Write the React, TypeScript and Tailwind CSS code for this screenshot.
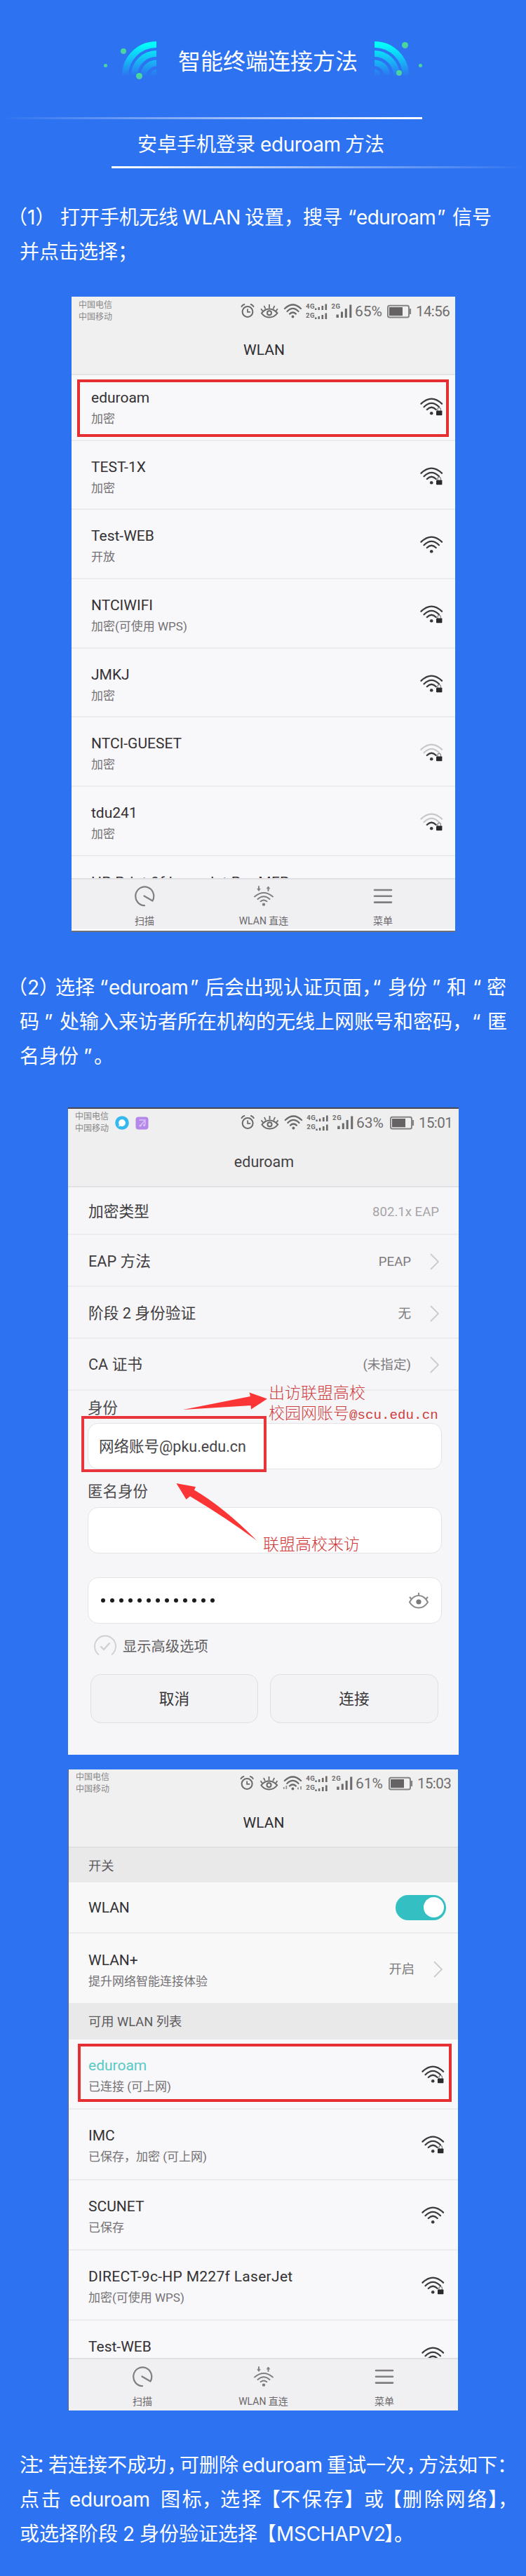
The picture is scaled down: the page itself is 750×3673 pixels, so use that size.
import React from "react";

type Seg = { t: string; w: string; c?: string };

const FONT_BODY = "font-['Inter','Noto_Sans_CJK_SC',sans-serif]";
const FONT_PHONE = "font-['Roboto','Noto_Sans_CJK_SC',sans-serif]";
const HALF = "[font-feature-settings:'halt']";
const LATIN = "tracking-[-0.4px]";

function Line({ segs }: { segs: Seg[] }) {
  return (
    <p className="flex h-[49px] whitespace-pre pl-7 text-[28px] leading-[52px] text-white">
      {segs.map((s, i) => (
        <span key={i} className={`shrink-0 ${s.w} ${s.c ?? ""}`}>
          {s.t}
        </span>
      ))}
    </p>
  );
}

const STEP_ONE: Seg[][] = [
  [
    { t: "（1）", w: "w-[61px] -ml-[3px]", c: HALF },
    { t: "打开手机无线", w: "w-[174px]" },
    { t: "WLAN", w: "w-[89px]", c: "tracking-[-0.2px]" },
    { t: "设置，", w: "w-[83px]" },
    { t: "搜寻", w: "w-[64px]" },
    { t: "“", w: "w-[12px]" },
    { t: "eduroam", w: "w-[115px]", c: "tracking-[-0.6px]" },
    { t: "”", w: "w-[22px]" },
    { t: "信号", w: "w-[56px]" },
  ],
  [{ t: "并点击选择", w: "w-[140px]" }, { t: "；", w: "w-[28px]" }],
];

const STEP_TWO: Seg[][] = [
  [
    { t: "（2）", w: "w-[54px] -ml-[3px]", c: HALF },
    { t: "选择", w: "w-[63px]" },
    { t: "“", w: "w-[13px]" },
    { t: "eduroam", w: "w-[116px]", c: "tracking-[-0.6px]" },
    { t: "”", w: "w-[21px]" },
    { t: "后会出现认证页面", w: "w-[224px]" },
    { t: "，", w: "w-[15px]", c: HALF },
    { t: "“", w: "w-[22px]" },
    { t: "身份", w: "w-[63px]" },
    { t: "”", w: "w-[21px]" },
    { t: "和", w: "w-[37px]" },
    { t: "“", w: "w-[20px]" },
    { t: "密", w: "w-[28px]" },
  ],
  [
    { t: "码", w: "w-[35px]" },
    { t: "”", w: "w-[22px]" },
    { t: "处输入来访者所在机构的无线上网账号和密码", w: "w-[560px]" },
    { t: "，", w: "w-[28px]" },
    { t: "“", w: "w-[22px]" },
    { t: "匿", w: "w-[28px]" },
  ],
  [
    { t: "名身份", w: "w-[91px]" },
    { t: "”", w: "w-[15px]" },
    { t: "。", w: "w-[28px]" },
  ],
];

const NOTE: Seg[][] = [
  [
    { t: "注", w: "w-[23px]" },
    { t: "：", w: "w-[18px]", c: HALF },
    { t: "若连接不成功", w: "w-[169px]" },
    { t: "，", w: "w-[18px]", c: HALF },
    { t: "可删除", w: "w-[89px]" },
    { t: "eduroam", w: "w-[121px]", c: LATIN },
    { t: "重试一次", w: "w-[113px]" },
    { t: "，", w: "w-[18px]", c: HALF },
    { t: "方法如下", w: "w-[112px]" },
    { t: "：", w: "w-[14px]", c: HALF },
  ],
  [
    { t: "点击", w: "w-[71px]", c: "tracking-[2.8px]" },
    { t: "eduroam", w: "w-[130px]", c: LATIN },
    { t: "图标", w: "w-[59px]", c: "tracking-[2.8px]" },
    { t: "，", w: "w-[26px]" },
    { t: "选择", w: "w-[72px]", c: "tracking-[2.8px]" },
    { t: "【", w: "w-[14px]", c: HALF },
    { t: "不保存", w: "w-[91px]", c: "tracking-[2.8px]" },
    { t: "】", w: "w-[28px]", c: HALF },
    { t: "或", w: "w-[40px]" },
    { t: "【", w: "w-[15px]", c: HALF },
    { t: "删除网络", w: "w-[122px]", c: "tracking-[2.8px]" },
    { t: "】", w: "w-[14px]", c: HALF },
    { t: "，", w: "w-[14px]", c: HALF },
  ],
  [
    { t: "或选择阶段", w: "w-[147px]" },
    { t: "2", w: "w-[24px]" },
    { t: "身份验证选择", w: "w-[181px]" },
    { t: "【", w: "w-[14px]", c: HALF },
    { t: "MSCHAPV2", w: "w-[154px]", c: "tracking-[-0.3px]" },
    { t: "】", w: "w-[14px]", c: HALF },
    { t: "。", w: "w-[28px]" },
  ],
];

function Waves({ side }: { side: "left" | "right" }) {
  const dots =
    side === "left"
      ? [
          [28, 17, 4],
          [2.5, 37.5, 2.5],
          [50.5, 52.5, 4.5],
        ]
      : [
          [43.5, 8.5, 4.5],
          [65.5, 37.5, 2.5],
          [35, 48, 4],
        ];
  return (
    <svg width="75" height="60" viewBox="0 0 75 60" className="shrink-0">
      <defs>
        <linearGradient id={`wave-${side}`} gradientUnits="userSpaceOnUse" x1="0" y1="7" x2="0" y2="53">
          <stop offset="0" stopColor="#00fffb" />
          <stop offset="1" stopColor="#2d72f0" />
        </linearGradient>
        <linearGradient id={`dot-${side}`} x1="0" y1="0" x2="0" y2="1">
          <stop offset="0" stopColor="#43e08f" />
          <stop offset="1" stopColor="#52c9b0" />
        </linearGradient>
      </defs>
      {side === "left" ? (
        <g fill="none" stroke="url(#wave-left)" strokeWidth="9">
          <path d="M30.5 52A44.5 44.5 0 0 1 75 7.5" />
          <path d="M43.5 52A31.5 31.5 0 0 1 75 20.5" />
          <path d="M57 52A18 18 0 0 1 75 34" />
          <path d="M75 43a9 9 0 0 0-9 9h9z" fill="url(#wave-left)" stroke="none" />
        </g>
      ) : (
        <g fill="none" stroke="url(#wave-right)" strokeWidth="9">
          <path d="M0 7.5A44.5 44.5 0 0 1 44.5 52" />
          <path d="M0 20.5A31.5 31.5 0 0 1 31.5 52" />
          <path d="M0 34A18 18 0 0 1 18 52" />
          <path d="M0 43a9 9 0 0 1 9 9H0z" fill="url(#wave-right)" stroke="none" />
        </g>
      )}
      {dots.map(([x, y, r], i) => (
        <circle key={i} cx={x} cy={y} r={r} fill={`url(#dot-${side})`} />
      ))}
    </svg>
  );
}

function WifiIcon({ lock, weak, color = "#3c3a3d" }: { lock?: boolean; weak?: boolean; color?: string }) {
  const faint = weak ? "#c9c8ca" : color;
  return (
    <svg width="33" height="26" viewBox="0 0 33 26" fill="none" strokeWidth="2.3" strokeLinecap="round">
      <path d="M1.5 8.7Q16.25-5.5 31 8.7" stroke={faint} />
      <path d="M5.5 13.3Q16.25 2.5 27 13.3" stroke={faint} />
      <path d="M9.8 17Q16.25 10.5 22.7 17" stroke={color} />
      <circle cx="16.2" cy="22.3" r="2.3" fill={color} />
      {lock && (
        <>
          <path d="M25 19v-2.4a2.2 2.2 0 0 1 4.4 0V19" stroke="#8d8b8e" strokeWidth="1.3" />
          <rect x="23" y="18.5" width="8.4" height="6.7" rx="0.8" fill="#2b292c" />
        </>
      )}
    </svg>
  );
}

function StatusIcons({ width, extra }: { width: number; extra?: boolean }) {
  return (
    <svg width={width} height="26" viewBox="0 0 164 26" preserveAspectRatio="none" fill="none" stroke="#6c6a6a" strokeWidth="2" className="shrink-0">
      <circle cx="13" cy="13.5" r="7.4" />
      <path d="M13 9.5v4.3h4" strokeWidth="1.8" />
      <path d="M4.5 6.2Q5.5 3.8 8.3 3M21.5 6.2Q20.5 3.8 17.7 3" strokeLinecap="round" />
      <path d="M33 15.5Q37.5 9.5 44 9.5T55.5 15.5Q51 21.5 44 21.5T33 15.5z" />
      <circle cx="44" cy="15.3" r="3" />
      <path d="M44 8.5V3M38.5 9.5L36.5 5M49.5 9.5L51.5 5M34.5 12.5L32.2 9.3M53.5 12.5L55.8 9.3" strokeWidth="1.8" />
      <g strokeLinecap="round" strokeWidth="2.2">
        <path d="M66 9Q77.5-2 89 9" />
        <path d="M69.5 13Q77.5 4.8 85.5 13" />
        <path d="M73 16.6Q77.5 12.4 82 16.6" />
      </g>
      <circle cx="77.5" cy="20.5" r="1.9" fill="#6c6a6a" stroke="none" />
      {extra && <path d="M65 18v3M68.5 16v5M85 18.5v3M89 17v4.5" strokeWidth="1.8" opacity="0.7" />}
      <g fill="#6c6a6a" stroke="none">
        <text x="96" y="9" className="text-[9.5px] font-bold" textLength="12.5">4G</text>
        <text x="96" y="22" className="text-[9.5px] font-bold" textLength="12.5">2G</text>
        <text x="132.5" y="9" className="text-[9.5px] font-bold" textLength="12.5">2G</text>
        <rect x="109" y="8.5" width="2.4" height="2.5" />
        <rect x="113.5" y="7" width="2.4" height="4" />
        <rect x="118.5" y="5" width="2.6" height="6" />
        <rect x="123.5" y="2.5" width="2.6" height="8.5" />
        <rect x="109" y="21.5" width="2.4" height="2.5" />
        <rect x="113.5" y="20" width="2.4" height="4" />
        <rect x="118.5" y="18" width="2.6" height="6" />
        <rect x="123.5" y="15.5" width="2.6" height="8.5" />
        <rect x="139.5" y="17.5" width="3.4" height="4.5" />
        <rect x="146" y="13.5" width="3" height="8.5" />
        <rect x="151.8" y="9" width="3" height="13" />
        <rect x="158.3" y="3.5" width="3" height="18.5" />
      </g>
    </svg>
  );
}

function Battery() {
  return (
    <svg width="35" height="20" viewBox="0 0 35 20" fill="none" className="shrink-0">
      <rect x="1" y="1.8" width="30" height="16.6" rx="2.5" stroke="#858383" strokeWidth="2" />
      <rect x="3" y="4" width="19" height="12.2" fill="#656363" />
      <path d="M33 6v8" stroke="#858383" strokeWidth="2.2" />
    </svg>
  );
}

function StatusBar(p: {
  pad: string;
  carrierW: string;
  icons: number;
  pctW: string;
  pct: string;
  time: string;
  apps?: boolean;
  extra?: boolean;
}) {
  return (
    <div className={`flex h-[26px] items-center text-[#6f6d6d] ${p.pad}`}>
      <div className={`flex shrink-0 items-center ${p.carrierW}`}>
        <div className="text-[12px] leading-[17px] text-[#8a8888]">
          <div>中国电信</div>
          <div>中国移动</div>
        </div>
        {p.apps && (
          <>
            <svg width="20" height="20" viewBox="0 0 20 20" className="ml-[8.5px]">
              <circle cx="10" cy="10" r="9.8" fill="#35b8ee" />
              <path d="M10 5a5 5 0 1 1-2.2 9.5L5 15.2l.9-2.4A5 5 0 0 1 10 5z" fill="#fff" />
            </svg>
            <svg width="19" height="19" viewBox="0 0 19 19" className="ml-[9px]">
              <rect x="0.5" y="0.5" width="18" height="18" rx="4" fill="#b488e8" />
              <path d="M5.500 5h8.500v6.500M7.500 12.500l5.500-6" stroke="#dcc5fa" strokeWidth="1.4" fill="none" />
              <circle cx="7" cy="13" r="1.6" fill="#dcc5fa" />
              <circle cx="12.6" cy="12.3" r="1.6" fill="#dcc5fa" />
            </svg>
          </>
        )}
      </div>
      <StatusIcons width={p.icons} extra={p.extra} />
      <span className={`shrink-0 pl-[2px] text-[21px] leading-[26px] ${p.pctW}`}>{p.pct}</span>
      <Battery />
      <span className="ml-[6px] text-[20.5px] leading-[26px] tracking-[-0.6px]">{p.time}</span>
    </div>
  );
}

function Chevron() {
  return (
    <svg width="13" height="24" viewBox="0 0 13 24" fill="none" stroke="#cbcbcd" strokeWidth="1.8" className="shrink-0">
      <path d="M1 1l11 11L1 23" />
    </svg>
  );
}

type Net = { name: string; sub?: string; lock?: boolean; weak?: boolean; active?: boolean; track?: string };

function NetRow({ net, height, pad }: { net: Net; height: string; pad: string }) {
  return (
    <div className={`flex shrink-0 items-start justify-between border-b-2 border-[#ecebed] ${height} ${pad}`}>
      <div className="pt-[25px]">
        <div className={`whitespace-nowrap text-[21px] leading-[24px] ${net.active ? "text-[#58c9c5]" : "text-[#333134]"} ${net.track ?? ""}`}>
          {net.name}
        </div>
        {net.sub && <div className="mt-[8px] whitespace-nowrap text-[17px] leading-[20px] text-[#747275]">{net.sub}</div>}
      </div>
      <div className="pt-[37px]">
        <WifiIcon lock={net.lock} weak={net.weak} />
      </div>
    </div>
  );
}

function Toolbar({ pad, height }: { pad: string; height: string }) {
  return (
    <div className={`flex shrink-0 border-t-2 border-[#e0dfe1] bg-[#f0eff1] text-[14px] leading-[18px] text-[#6b696c] ${pad} ${height}`}>
      <div className="flex w-[80px] flex-col items-center">
        <svg width="30" height="30" viewBox="0 0 30 30" fill="none" stroke="#807e81" strokeWidth="2.2" strokeLinecap="round" strokeLinejoin="round">
          <path d="M15 28.2A13 13.4 0 1 1 26.5 21.5L14.5 14.5" />
        </svg>
        <span className="mt-[11px]">扫描</span>
      </div>
      <div className="flex w-[90px] flex-col items-center">
        <svg width="30" height="30" viewBox="0 0 30 30" fill="none" stroke="#807e81" strokeWidth="1.9" strokeLinecap="round">
          <path d="M8 1v5M21.5 2v5" />
          <path d="M5.8 4.5L8 7.5l2.2-3zM19.3 3.8L21.5 1l2.2 2.8z" fill="#807e81" strokeWidth="0.6" />
          <path d="M2 15.5Q15 4.5 28 15.5M6.5 19Q15 11.5 23.5 19M10.5 22.2Q15 18.6 19.5 22.2" />
          <circle cx="15" cy="26.6" r="2.2" fill="#807e81" stroke="none" />
        </svg>
        <span className="mt-[11px] whitespace-nowrap">WLAN 直连</span>
      </div>
      <div className="flex w-[80px] flex-col items-center">
        <svg width="30" height="30" viewBox="0 0 30 30" stroke="#807e81" strokeWidth="2.6" strokeLinecap="round">
          <path d="M3 6h24M3 14.8h24M3 23.6h24" />
        </svg>
        <span className="mt-[11px]">菜单</span>
      </div>
    </div>
  );
}

const SCAN_LIST: Net[] = [
  { name: "eduroam", sub: "加密", lock: true },
  { name: "TEST-1X", sub: "加密", lock: true },
  { name: "Test-WEB", sub: "开放" },
  { name: "NTCIWIFI", sub: "加密(可使用 WPS)", lock: true },
  { name: "JMKJ", sub: "加密", lock: true },
  { name: "NTCI-GUESET", sub: "加密", lock: true, weak: true },
  { name: "tdu241", sub: "加密", lock: true, weak: true },
];

const CONNECTED_LIST: Net[] = [
  { name: "eduroam", sub: "已连接 (可上网)", lock: true, active: true },
  { name: "IMC", sub: "已保存，加密 (可上网)", lock: true },
  { name: "SCUNET", sub: "已保存" },
  { name: "DIRECT-9c-HP M227f LaserJet", sub: "加密(可使用 WPS)", lock: true, track: "tracking-[0.3px]" },
  { name: "Test-WEB" },
];

function ScanPhone() {
  return (
    <section className="relative ml-[102px] mt-[41px] flex h-[906px] w-[547px] flex-col overflow-hidden bg-[#f8f7f9]">
      <div className="h-[112px] shrink-0 border-b-2 border-[#e4e4e4] bg-[#f0f0f0] pt-[8px]">
        <StatusBar pad="pl-[10px]" carrierW="w-[228px]" icons={164} pctW="w-[48px]" pct="65%" time="14:56" />
        <h3 className="mt-[29px] pl-[2px] text-center text-[21px] leading-[26px] text-[#2f2d30]">WLAN</h3>
      </div>
      <div className="flex h-[717px] shrink-0 flex-col overflow-hidden">
        <div className="-mt-[5px] flex flex-col">
          {SCAN_LIST.map((n) => (
            <NetRow key={n.name} net={n} height="h-[98.7px]" pad="pl-[28px] pr-[17px]" />
          ))}
          <div className="pl-[28px] pt-[25px] text-[21px] leading-[24px] tracking-[0.3px] text-[#333134]">HP Print 9f LaserJet Pro MFP</div>
        </div>
      </div>
      <Toolbar pad="pl-[64px] gap-[85px] pt-[9px]" height="h-[73px]" />
      <div className="h-[2px] bg-white" />
      <div className="h-[2px] bg-[#6e7078]" />
      <div className="absolute left-[8px] top-[118px] h-[82px] w-[530px] border-[4.5px] border-[#e62f33]" />
    </section>
  );
}

function FieldRow({ label, value, arrow, height }: { label: string; value: string; arrow?: boolean; height: string }) {
  return (
    <div className={`flex items-center justify-between border-b-2 border-[#ececee] pl-[29px] pr-[28px] pt-[3px] ${height}`}>
      <span className="text-[21.7px] leading-[26px] text-[#3f3d40]">{label}</span>
      <span className={`flex items-center gap-[27px] text-[18.6px] leading-[24px] ${arrow ? "text-[#7d7b7e]" : "text-[#a7a5a8]"}`}>
        {value}
        {arrow && <Chevron />}
      </span>
    </div>
  );
}

function LoginPhone() {
  return (
    <section className="relative ml-[97px] mt-[50px] h-[923px] w-[557px] overflow-hidden bg-[#f6f6f8]">
      <div className="h-[2px] bg-[#4a4650]" />
      <div className="h-[112px] border-b-2 border-[#e2e2e4] bg-[#efeff0] pt-[7px]">
        <StatusBar pad="pl-[10px]" carrierW="w-[233px]" icons={166} pctW="w-[50px]" pct="63%" time="15:01" apps />
        <h3 className="mt-[30px] pl-[2px] text-center text-[21.5px] leading-[26px] text-[#444245]">eduroam</h3>
      </div>
      <FieldRow label="加密类型" value="802.1x EAP" height="h-[68px]" />
      <FieldRow label="EAP 方法" value="PEAP" arrow height="h-[74px]" />
      <FieldRow label="阶段 2 身份验证" value="无" arrow height="h-[74px]" />
      <FieldRow label="CA 证书" value="(未指定)" arrow height="h-[73.5px]" />
      <div className="pl-[28px] text-[21.5px] text-[#4c4a4d]">
        <div className="mt-[12px] leading-[26px]">身份</div>
        <div className="mt-[8.5px] flex h-[66px] w-[505px] items-center rounded-[15px] border-[1.5px] border-[#e4e4e6] bg-white pl-[15px] pt-[2px] text-[#464447]">
          网络账号@pku.edu.cn
        </div>
        <div className="mt-[19px] leading-[26px]">匿名身份</div>
        <div className="mt-[9px] h-[66px] w-[505px] rounded-[15px] border-[1.5px] border-[#e4e4e6] bg-white" />
        <div className="mt-[34px] flex h-[66px] w-[505px] items-center justify-between rounded-[15px] border-[1.5px] border-[#e4e4e6] bg-white pl-[18px] pr-[17px]">
          <div className="flex gap-[7px]">
            {Array.from({ length: 13 }, (_, i) => (
              <span key={i} className="h-[6px] w-[6px] rounded-full bg-[#1d1b1e]" />
            ))}
          </div>
          <svg width="30" height="26" viewBox="0 0 30 26" fill="none" stroke="#8b898c" strokeWidth="2">
            <path d="M2 15.5Q7 6 15 6T28 15.5Q23 23.5 15 23.5T2 15.5z" />
            <path d="M15 6V2M4.5 11L2 8M25.5 11L28 8" />
            <circle cx="15" cy="15" r="3.6" fill="#7b797c" stroke="none" />
          </svg>
        </div>
      </div>
      <div className="mt-[15px] flex h-[34px] items-center pl-[36px]">
        <svg width="34" height="34" viewBox="0 0 34 34" fill="none" stroke="#cfcfd1" strokeWidth="1.8">
          <path d="M8 29.5A15 15 0 1 1 26 29.5" />
          <path d="M10.5 17.5l4.5 4.5 8.5-9.5" strokeWidth="2.4" />
        </svg>
        <span className="ml-[8px] pt-[2px] text-[20.3px] leading-[26px] text-[#5f5d60]">显示高级选项</span>
      </div>
      <div className="mt-[23px] flex gap-[17px] pl-[32px] text-[21.7px] text-[#39373a]">
        <div className="flex h-[70px] w-[239px] items-center justify-center rounded-[15px] border-[1.5px] border-[#dfdfe1] bg-[#f3f3f5] pt-[2px]">取消</div>
        <div className="flex h-[70px] w-[240px] items-center justify-center rounded-[15px] border-[1.5px] border-[#dfdfe1] bg-[#f3f2f4] pt-[2px]">连接</div>
      </div>
      <div className="absolute left-[19px] top-[440px] h-[80px] w-[264px] border-4 border-[#e8353b]" />
      <svg width="557" height="923" viewBox="0 0 557 923" className="absolute left-0 top-0" fill="#fb3535">
        <path d="M164 431L260 412L258.5 406.5L284 415.5L261 430.5L260.5 425z" />
        <path d="M154.5 536L182 541L180 545.5Q222 570 269 617.5Q225 585 174 554.5L168.5 559z" />
      </svg>
      <div className="absolute left-[286px] top-[395px] whitespace-nowrap font-['Liberation_Mono','Noto_Sans_CJK_SC',monospace] text-[23px] font-light leading-[29px] text-[#cf3d3e]">
        <div>出访联盟高校</div>
        <div>
          校园网账号<span className="text-[19.2px] font-normal">@scu.edu.cn</span>
        </div>
      </div>
      <div className="absolute left-[278px] top-[610.5px] whitespace-nowrap font-['Liberation_Mono','Noto_Sans_CJK_SC',monospace] text-[23px] font-light leading-[29px] text-[#cf3334]">
        联盟高校来访
      </div>
    </section>
  );
}

function ConnectedPhone() {
  return (
    <section className="relative ml-[97px] mt-[21px] flex h-[914px] w-[556px] flex-col overflow-hidden bg-[#f8f7f9]">
      <div className="h-[112px] shrink-0 border-b-2 border-[#e0e0e0] bg-[#f0f0f0] pt-[7px]">
        <StatusBar pad="pl-[11px]" carrierW="w-[231px]" icons={166} pctW="w-[49px]" pct="61%" time="15:03" extra />
        <h3 className="mt-[30px] pl-[2px] text-center text-[21px] leading-[26px] text-[#2f2d30]">WLAN</h3>
      </div>
      <div className="flex h-[49px] shrink-0 items-center bg-[#e9e9ea] pl-[29px] pt-[3px] text-[18.3px] text-[#5c5a5d]">开关</div>
      <div className="flex h-[73px] shrink-0 items-center justify-between border-b-2 border-[#ececee] bg-[#f8f8f9] pl-[29px] pr-[17px]">
        <span className="pt-[2px] text-[21px] text-[#333134]">WLAN</span>
        <div className="flex h-[36px] w-[72px] items-center justify-end rounded-full bg-[#34c0c3] pr-[3px]">
          <div className="h-[29px] w-[29px] rounded-full bg-white" />
        </div>
      </div>
      <div className="flex h-[99px] shrink-0 items-start justify-between bg-[#f8f8f9] pl-[29px] pr-[22px]">
        <div className="pt-[26px]">
          <div className="text-[21px] leading-[24px] text-[#333134]">WLAN+</div>
          <div className="mt-[8px] text-[17px] leading-[20px] text-[#747275]">提升网络智能连接体验</div>
        </div>
        <div className="flex items-center gap-[27px] pt-[39px] text-[18.3px] leading-[24px] text-[#7d7b7e]">
          开启
          <Chevron />
        </div>
      </div>
      <div className="flex h-[52px] shrink-0 items-center bg-[#e9e9ea] pl-[29px] pt-[2px] text-[18.3px] text-[#5c5a5d]">可用 WLAN 列表</div>
      <div className="h-[454px] shrink-0 overflow-hidden">
        {CONNECTED_LIST.map((n) => (
          <NetRow key={n.name} net={n} height="h-[100.3px]" pad="pl-[29px] pr-[19px]" />
        ))}
      </div>
      <Toolbar pad="pl-[66px] gap-[87.5px] pt-[10px]" height="h-[75px]" />
      <div className="absolute left-0 top-0 h-full w-px bg-[#6b6670]" />
      <div className="absolute left-[14px] top-[391px] h-[83px] w-[532.5px] border-4 border-[#e62f33]" />
    </section>
  );
}

export default function App() {
  return (
    <main className={`h-[3673px] w-[750px] overflow-hidden bg-[#2d72f0] ${FONT_BODY}`}>
      <header className="flex h-[167px] items-start pl-[148px] pt-[56px]">
        <Waves side="left" />
        <h1 className="w-[311px] whitespace-nowrap pl-[31px] text-[32px] font-normal leading-[64px] text-white">智能终端连接方法</h1>
        <Waves side="right" />
      </header>
      <div className="h-[3px] w-[602px] bg-gradient-to-r from-transparent to-white" />
      <h2 className="flex h-[67px] items-center whitespace-pre pl-[196px] pt-[5px] text-[28px] text-white">
        <span className="w-[175px]">安卓手机登录</span>
        <span className="w-[121px] tracking-[-0.4px]">eduroam</span>
        <span>方法</span>
      </h2>
      <div className="ml-[159px] h-[3px] w-[591px] bg-gradient-to-r from-white to-transparent" />
      <div className="mt-[44px]">
        {STEP_ONE.map((l, i) => (
          <Line key={i} segs={l} />
        ))}
      </div>
      <div className={FONT_PHONE}>
        <ScanPhone />
      </div>
      <div className="mt-[53px]">
        {STEP_TWO.map((l, i) => (
          <Line key={i} segs={l} />
        ))}
      </div>
      <div className={FONT_PHONE}>
        <LoginPhone />
        <ConnectedPhone />
      </div>
      <div className="mt-[52px]">
        {NOTE.map((l, i) => (
          <Line key={i} segs={l} />
        ))}
      </div>
    </main>
  );
}
